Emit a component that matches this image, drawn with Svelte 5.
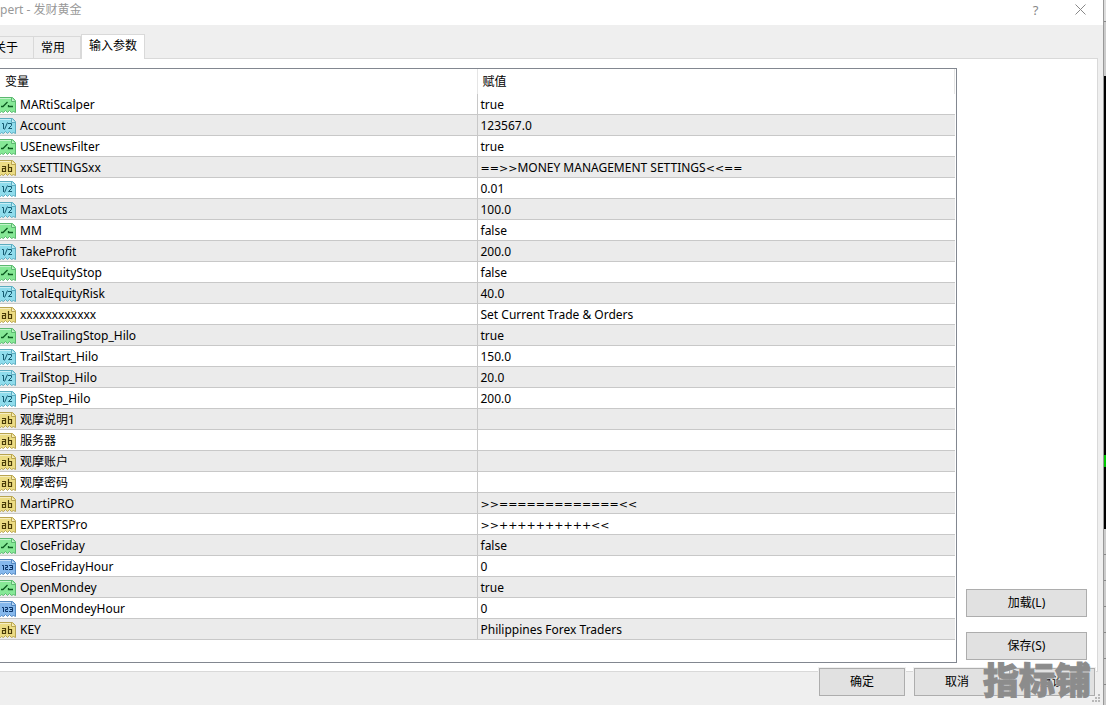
<script>
    // Expert properties dialog, "inputs" tab.

    const tabs = ['关于', '常用', '输入参数']
    let active = $state(2)

    const rows = [
        { type: 'bool', name: 'MARtiScalper', value: 'true' },
        { type: 'double', name: 'Account', value: '123567.0' },
        { type: 'bool', name: 'USEnewsFilter', value: 'true' },
        { type: 'string', name: 'xxSETTINGSxx', value: '==>>MONEY MANAGEMENT SETTINGS<<==' },
        { type: 'double', name: 'Lots', value: '0.01' },
        { type: 'double', name: 'MaxLots', value: '100.0' },
        { type: 'bool', name: 'MM', value: 'false' },
        { type: 'double', name: 'TakeProfit', value: '200.0' },
        { type: 'bool', name: 'UseEquityStop', value: 'false' },
        { type: 'double', name: 'TotalEquityRisk', value: '40.0' },
        { type: 'string', name: 'xxxxxxxxxxxx', value: 'Set Current Trade & Orders' },
        { type: 'bool', name: 'UseTrailingStop_Hilo', value: 'true' },
        { type: 'double', name: 'TrailStart_Hilo', value: '150.0' },
        { type: 'double', name: 'TrailStop_Hilo', value: '20.0' },
        { type: 'double', name: 'PipStep_Hilo', value: '200.0' },
        { type: 'string', name: '观摩说明1', value: '' },
        { type: 'string', name: '服务器', value: '' },
        { type: 'string', name: '观摩账户', value: '' },
        { type: 'string', name: '观摩密码', value: '' },
        { type: 'string', name: 'MartiPRO', value: '>>=============<<' },
        { type: 'string', name: 'EXPERTSPro', value: '>>++++++++++<<' },
        { type: 'bool', name: 'CloseFriday', value: 'false' },
        { type: 'int', name: 'CloseFridayHour', value: '0' },
        { type: 'bool', name: 'OpenMondey', value: 'true' },
        { type: 'int', name: 'OpenMondeyHour', value: '0' },
        { type: 'string', name: 'KEY', value: 'Philippines Forex Traders' },
    ]

    const colors = {
        bool: { fill: '#86e896', edge: '#5cb870', ink: '#0c5c20' },
        double: { fill: '#8fdcec', edge: '#5cacc0', ink: '#145a70' },
        string: { fill: '#ecdc84', edge: '#b8a450', ink: '#4a3c08' },
        int: { fill: '#86b8ec', edge: '#5488c0', ink: '#0c3468' },
    }

    // splits a value into runs of operators and runs of plain text
    function runs(value) {
        return value.match(/[=<>+]+|[^=<>+]+/g) || []
    }
</script>

{#snippet icon(type)}
    {@const c = colors[type]}
    <svg class="icon" width="16" height="16" viewBox="0 0 16 16" aria-hidden="true">
        <path
            d="M-2.5 1.5Q-2.5.5-1.5.5H12.5L15.5 3.5V15.5L13.5 14.5L11.5 15.5L9.5 13.5L7.5 15.5L5.5 13.5L3.5 15.5L1.5 14.5L.5 15.5L-2.5 13.5Z"
            fill={c.fill} stroke={c.edge} />
        <path d="M0 1.5H11.5" stroke="#fff" stroke-opacity=".5" />
        <path d="M11.5 1V4.5H15" fill="#fff" fill-opacity=".5" stroke={c.edge} />
        <g fill="none" stroke={c.ink} stroke-width="1">
            {#if type === 'bool'}
                <path d="M1 9.5H3L7.5 5M8.5 8V9.5H13" stroke-width="1.3" />
            {:else if type === 'double'}
                <path d="M2 5.5H3.5V11M7.5 4.5L4.5 11.5M8 5.5H11.5V7.5L8.5 10.5H12" />
            {:else if type === 'string'}
                <path d="M2 6.5H5.5V12M5 8.5H2.5V11.5H5.5M8.5 4V11.5H11.5V7.5H8.5" stroke-width="1.2" />
            {:else}
                <path d="M2 6.5H3.5V11M5 6.5H7.5V8.5H5.5V10.5H8M9 6.5H12.5V10.5H9M10 8.5H12.5" />
            {/if}
        </g>
    </svg>
{/snippet}

<div class="screen">
    <main class="dialog">
        <header class="titlebar">
            <span class="title">pert - 发财黄金</span>
            <button class="tool" aria-label="帮助">?</button>
            <button class="tool" aria-label="关闭">
                <svg width="11" height="11" viewBox="0 0 11 11">
                    <path d="M.5.5L10.5 10.5M10.5.5L.5 10.5" stroke="#888" fill="none" />
                </svg>
            </button>
        </header>

        <div class="tabs" role="tablist">
            {#each tabs as tab, i}
                <button
                    class="tab"
                    class:active={active === i}
                    role="tab"
                    aria-selected={active === i}
                    onclick={() => (active = i)}>{tab}</button>
            {/each}
        </div>

        <section class="page">
            <div class="list">
                <table>
                    <thead>
                        <tr><th>变量</th><th>赋值</th></tr>
                    </thead>
                    <tbody>
                        {#each rows as row (row.name)}
                            <tr>
                                <td><div class="name">{@render icon(row.type)}<span>{row.name}</span></div></td>
                                <td>{#each runs(row.value) as run}<span class:ops={/[=<>+]/.test(run)}>{run}</span>{/each}</td>
                            </tr>
                        {/each}
                    </tbody>
                </table>
            </div>
            <div class="side">
                <button class="btn">加载(L)</button>
                <button class="btn">保存(S)</button>
            </div>
        </section>

        <footer class="actions">
            <button class="btn">确定</button>
            <button class="btn">取消</button>
            <button class="btn">重设</button>
            <div class="watermark">指标铺</div>
            <svg class="grip" width="9" height="9" viewBox="0 0 9 9" aria-hidden="true">
                <path
                    d="M6 0h2v2H6zM3 3h2v2H3zM6 3h2v2H6zM0 6h2v2H0zM3 6h2v2H3zM6 6h2v2H6z"
                    fill="#b8b8b8" />
            </svg>
        </footer>
    </main>

    <div class="behind">
        <div class="behind-top"></div>
        <div class="chart"><div class="candle"></div></div>
        <div class="behind-rows"></div>
    </div>
</div>

<style>
    :global(body) {
        margin: 0;
        overflow: hidden;
    }

    .screen {
        display: flex;
        min-height: 100vh;
        background: #efefef;
        color: #000;
        font: 12px/20px "Noto Sans", "Noto Sans CJK SC", sans-serif;
    }

    button {
        padding: 0;
        color: #000;
        font: 12px/20px "Noto Sans", "Noto Sans CJK SC", sans-serif;
    }

    .dialog {
        flex: 1;
        min-width: 0;
        display: flex;
        flex-direction: column;
    }

    .titlebar {
        display: flex;
        height: 25px;
        background: #fff;
        color: #999;
    }

    .title {
        flex: 1;
    }

    .tool {
        width: 45px;
        height: 19px;
        display: flex;
        align-items: center;
        justify-content: center;
        border: 0;
        background: none;
        color: #888;
        font-size: 13px;
    }

    .tabs {
        display: flex;
        align-items: flex-end;
        height: 33px;
        margin-left: -13px;
    }

    .tab {
        height: 22px;
        width: 47px;
        padding-right: 8px;
        border: 1px solid #d9d9d9;
        border-width: 1px 1px 0 0;
        background: #f0f0f0;
    }

    .tab.active {
        position: relative;
        width: 64px;
        height: 25px;
        margin-bottom: -1px;
        padding: 0 0 2px;
        border-left-width: 1px;
        background: #fff;
    }

    .page {
        flex: 1;
        display: flex;
        gap: 9px;
        margin-right: 5px;
        padding: 9px 10px 8px 0;
        border: 1px solid #d9d9d9;
        border-left: 0;
        background: #fff;
    }

    .list {
        flex: 1;
        border: 1px solid #828790;
        border-left: 0;
        padding-right: 1px;
    }

    table {
        width: 100%;
        table-layout: fixed;
        border-collapse: separate;
        border-spacing: 0;
    }

    th {
        height: 25px;
        padding: 0 5px;
        border-right: 1px solid #e5e5e5;
        box-sizing: border-box;
        font-weight: normal;
        text-align: left;
    }

    td {
        height: 21px;
        padding: 2px 3px 0;
        box-sizing: border-box;
        border-bottom: 1px solid #c8c8c8;
        line-height: 18px;
        white-space: nowrap;
    }

    td:first-child {
        padding: 2px 0 0;
        border-right: 1px solid #c8c8c8;
    }

    tbody tr:nth-child(even) {
        background: #ebebeb;
    }

    .name {
        display: flex;
        align-items: center;
        gap: 4px;
    }

    .icon {
        flex: none;
    }

    .ops {
        font-family: "DejaVu Sans", sans-serif;
        font-size: 11px;
        line-height: 1;
    }

    .side {
        width: 121px;
        display: flex;
        flex-direction: column;
        justify-content: flex-end;
        gap: 15px;
        padding-bottom: 3px;
    }

    .btn {
        height: 28px;
        border: 1px solid #adadad;
        background: #e1e1e1;
    }

    .actions {
        position: relative;
        display: flex;
        justify-content: flex-end;
        gap: 9px;
        height: 37px;
        margin-top: -4px;
        padding-right: 8px;
    }

    .actions .btn {
        width: 86px;
        box-shadow: 0 0 0 1px #f0f0f0;
    }

    .watermark {
        position: absolute;
        right: 12px;
        top: -8px;
        color: #8c8c8c;
        font: 900 36px/36px "Noto Sans CJK SC", sans-serif;
        -webkit-text-stroke: 1px #8c8c8c;
        text-shadow: 0 0 2px #eee;
        pointer-events: none;
    }

    .grip {
        position: absolute;
        right: 2px;
        bottom: 2px;
    }

    .behind {
        width: 3px;
        display: flex;
        flex-direction: column;
        border-left: 1px solid #999;
        box-sizing: border-box;
        background: #ccc;
    }

    .behind-top {
        flex: 76;
        background: linear-gradient(#ddd 21px, #888 21px 22px, #ccc 22px);
    }

    .chart {
        flex: 453;
        display: flex;
        flex-direction: column;
        background: #000;
    }

    .candle {
        height: 12px;
        margin-top: 379px;
        background: #00c800;
    }

    .behind-rows {
        flex: 176;
        background: repeating-linear-gradient(#ccc 0 25px, #888 25px 26px);
    }
</style>
